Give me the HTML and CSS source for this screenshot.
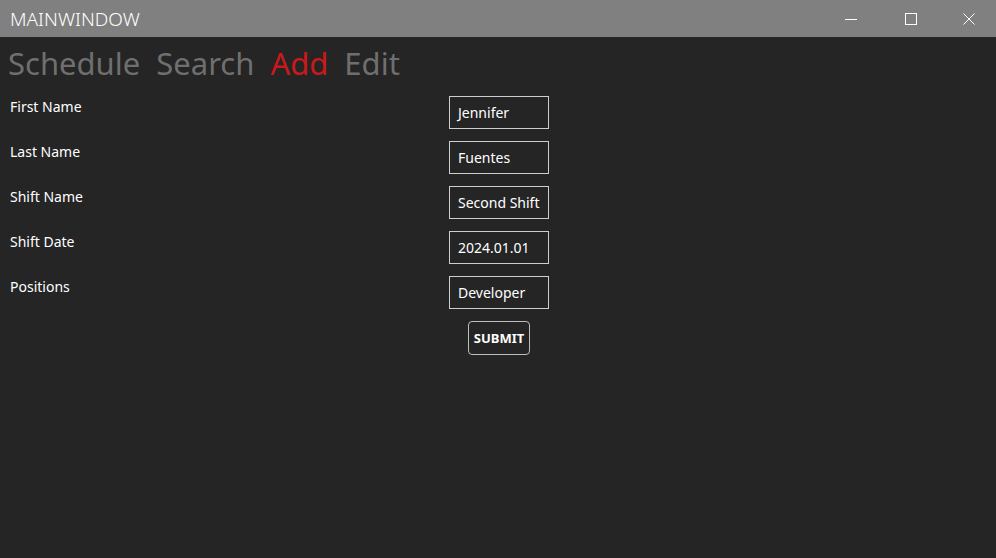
FILE: index.html
```html
<!DOCTYPE html>
<html>
<head>
<meta charset="utf-8">
<link rel="stylesheet" href="styles.css">
</head>
<body>
<div class="window">
  <header class="titlebar">
    <span class="title">MAINWINDOW</span>
    <div class="controls">
      <span class="ctl ctl-min"><svg width="14" height="14" viewBox="0 0 14 14"><path d="M1 7.5H13" stroke="#fff" stroke-width="1"/></svg></span>
      <span class="ctl ctl-max"><svg width="14" height="14" viewBox="0 0 14 14"><rect x="1.5" y="1.5" width="11" height="11" fill="none" stroke="#fff" stroke-width="1"/></svg></span>
      <span class="ctl ctl-close"><svg width="14" height="14" viewBox="0 0 14 14"><path d="M1.5 1.5L12.5 12.5M12.5 1.5L1.5 12.5" stroke="#fff" stroke-width="1"/></svg></span>
    </div>
  </header>
  <nav class="nav">
    <span class="tab">Schedule</span>
    <span class="tab">Search</span>
    <span class="tab active">Add</span>
    <span class="tab">Edit</span>
  </nav>
  <form class="form">
    <label class="lbl">First Name</label><div class="field">Jennifer</div>
    <label class="lbl">Last Name</label><div class="field">Fuentes</div>
    <label class="lbl">Shift Name</label><div class="field">Second Shift</div>
    <label class="lbl">Shift Date</label><div class="field">2024.01.01</div>
    <label class="lbl">Positions</label><div class="field">Developer</div>
    <div></div><div class="btnwrap"><button type="button" class="submit">SUBMIT</button></div>
  </form>
</div>
</body>
</html>
```
FILE: styles.css
```css
html, body { margin: 0; padding: 0; }
body {
  width: 996px;
  height: 558px;
  background: #252525;
  font-family: "Noto Sans", "Open Sans", sans-serif;
  overflow: hidden;
}
.window { display: flex; flex-direction: column; height: 558px; }
.titlebar {
  height: 37px;
  background: #808080;
  display: flex;
  align-items: center;
  justify-content: space-between;
}
.title {
  color: #fff;
  font-size: 19px;
  font-weight: 300;
  padding-left: 10px;
  padding-top: 1px;
}
.controls { display: flex; height: 37px; }
.ctl {
  display: flex;
  align-items: center;
  justify-content: center;
}
.ctl-min { width: 59px; }
.ctl-max { width: 61px; }
.ctl-close { width: 55px; }
.nav {
  display: flex;
  gap: 16px;
  padding: 4px 0 0 8px;
  height: 52px;
  box-sizing: border-box;
}
.tab {
  font-size: 31px;
  line-height: 44px;
  color: #6f6f6f;
}
.tab.active { color: #c81a1a; }
.form {
  display: grid;
  grid-template-columns: 439px 100px;
  row-gap: 12px;
  padding-left: 10px;
  padding-top: 7px;
}
.lbl {
  color: #fff;
  font-size: 14px;
  line-height: 20px;
  padding-top: 1px;
}
.field {
  box-sizing: border-box;
  height: 33px;
  border: 1px solid #cfcfcf;
  color: #fff;
  font-size: 14px;
  line-height: 31px;
  padding-left: 8px;
  white-space: nowrap;
  overflow: hidden;
}
.btnwrap { display: flex; justify-content: center; }
.submit {
  box-sizing: border-box;
  height: 34px;
  width: 62px;
  background: #252525;
  border: 1px solid #bdbdbd;
  border-radius: 4px;
  color: #fff;
  font-family: "Noto Sans", sans-serif;
  font-weight: 700;
  font-size: 13px;
  padding: 0;
}
```
